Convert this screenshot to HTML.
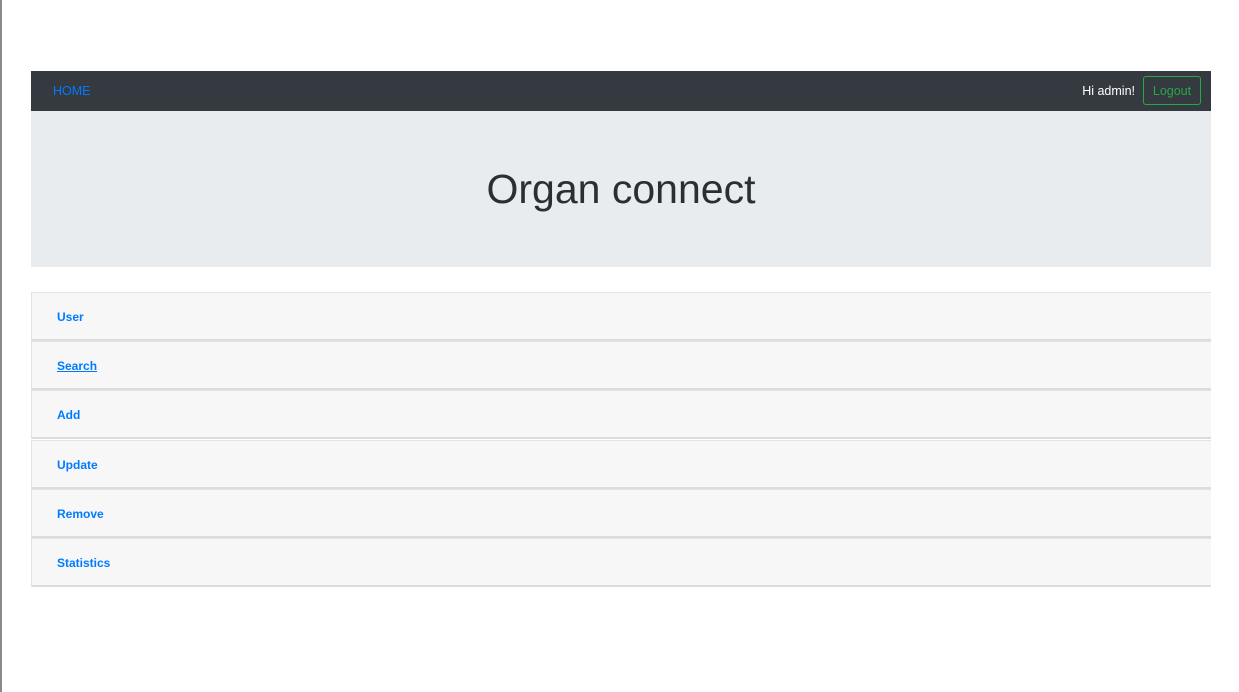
<!DOCTYPE html>
<html><head><meta charset="utf-8"><style>
html,body{margin:0;padding:0;background:#fff;width:1239px;height:692px;overflow:hidden;font-family:"Segoe UI","Liberation Sans",sans-serif;}
.lb{position:absolute;left:0;top:0;width:2px;height:692px;background:#8a8a8a;}
.nav{position:absolute;left:31px;top:71px;width:1180px;height:40px;background:#343a40;}
.home{position:absolute;left:22px;top:13px;color:#007bff;font-size:12.5px;}
.hi{position:absolute;right:76px;top:13px;color:#fff;font-size:12.5px;}
.lo{position:absolute;right:10px;top:5px;width:58px;height:29px;box-sizing:border-box;border:1px solid #28a745;border-radius:3px;color:#28a745;font-size:12.5px;text-align:center;line-height:28px;}
.jum{position:absolute;left:31px;top:111px;width:1180px;height:156px;background:#e9ecef;}
.jum h1{margin:0;position:absolute;left:0;right:0;top:51px;text-align:center;font-weight:300;font-size:41px;color:#2b2f33;line-height:54px;}
.card{position:absolute;left:31px;width:1180px;height:49px;box-sizing:border-box;background:#f7f7f7;border:1px solid #e3e3e3;border-bottom:2px solid #dcdcdc;border-right:none;}
.card a{position:absolute;left:25px;top:17px;color:#007bff;font-weight:bold;font-size:12px;text-decoration:none;}
</style></head><body>
<div class="lb"></div>
<div class="nav"><span class="home">HOME</span><span class="hi">Hi admin!</span><span class="lo">Logout</span></div>
<div class="jum"><h1>Organ connect</h1></div>
<div class="card" style="top:292px"><a>User</a></div>
<div class="card" style="top:341px"><a style="text-decoration:underline">Search</a></div>
<div class="card" style="top:390px"><a>Add</a></div>
<div class="card" style="top:440px"><a>Update</a></div>
<div class="card" style="top:489px"><a>Remove</a></div>
<div class="card" style="top:538px"><a>Statistics</a></div>
</body></html>
